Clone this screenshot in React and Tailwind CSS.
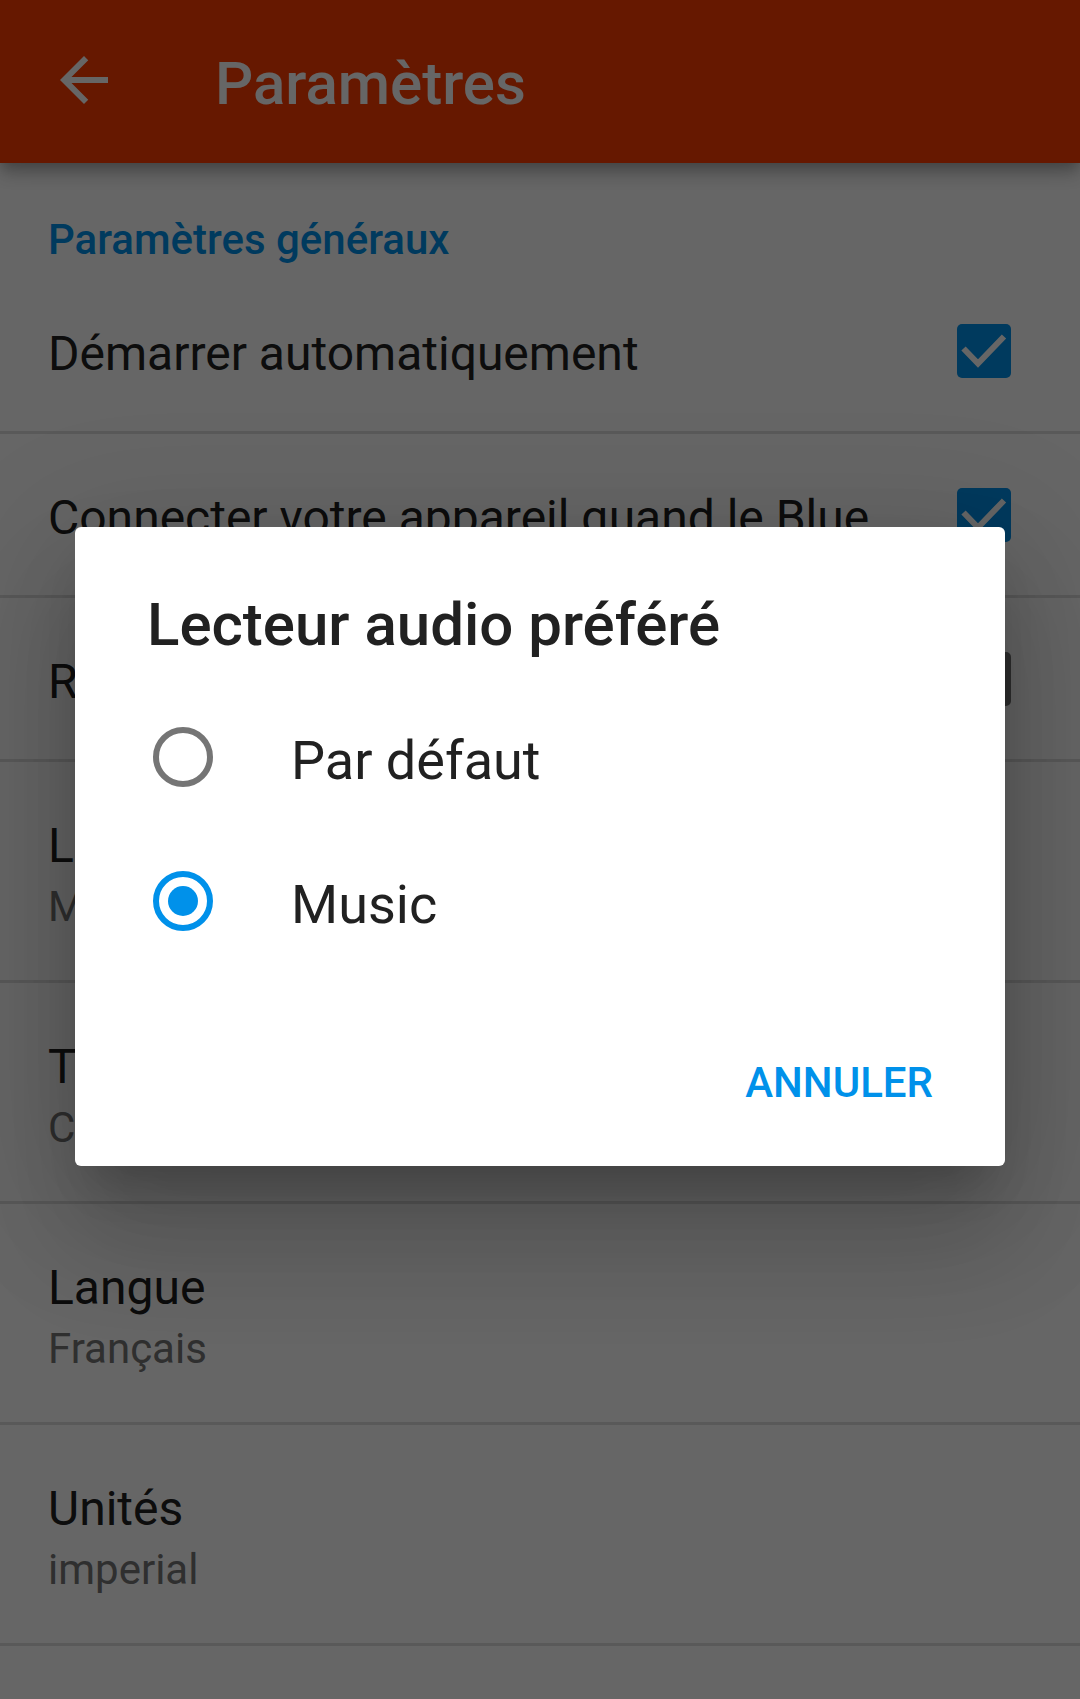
import React from "react";

function Check() {
  return (
    <svg width="54" height="54" viewBox="0 0 54 54">
      <polyline points="6.5,24.5 21,39.5 47,12.5" fill="none" stroke="#ffffff" strokeWidth="6" />
    </svg>
  );
}

function Checkbox({ checked }) {
  if (checked) {
    return (
      <div className="w-[54px] h-[54px] rounded-[5px] bg-[#0091EA] shrink-0 flex items-center justify-center">
        <Check />
      </div>
    );
  }
  return <div className="w-[54px] h-[54px] rounded-[5px] border-[6px] border-[#757575] shrink-0" />;
}

function SingleRow({ title, checked }) {
  return (
    <div className="h-[164px] border-b-[3px] border-[#dedede] flex items-center pl-[48px] pr-[69px] gap-[42px]">
      <div className="flex-1 min-w-0 pt-[6px] text-[48px] leading-[56px] text-[#212121] whitespace-nowrap overflow-hidden">{title}</div>
      <Checkbox checked={checked} />
    </div>
  );
}

function DoubleRow({ title, sub }) {
  return (
    <div className="h-[221px] border-b-[3px] border-[#dedede] pl-[48px] pt-[56px]">
      <div className="text-[48px] leading-[56px] text-[#212121]">{title}</div>
      <div className="mt-[9px] text-[42px] leading-[48px] text-[#757575]">{sub}</div>
    </div>
  );
}

function Radio({ checked }) {
  if (checked) {
    return (
      <div className="w-[60px] h-[60px] rounded-full border-[6px] border-[#0091EA] flex items-center justify-center shrink-0">
        <div className="w-[30px] h-[30px] rounded-full bg-[#0091EA]" />
      </div>
    );
  }
  return <div className="w-[60px] h-[60px] rounded-full border-[6px] border-[#757575] shrink-0" />;
}

export default function App() {
  return (
    <div className="relative w-[1080px] h-[1699px] overflow-hidden bg-white font-[Roboto,sans-serif]">
      {/* App bar */}
      <div className="relative z-10 h-[163px] bg-[#FF3D00] flex items-center shadow-[0_6px_12px_-3px_rgba(0,0,0,0.2),0_12px_15px_0_rgba(0,0,0,0.14),0_3px_30px_0_rgba(0,0,0,0.12)]">
        <div className="w-[72px] h-[72px] ml-[48px] mt-[-3px]">
          <svg width="72" height="72" viewBox="0 0 24 24">
            <path d="M20 11H7.83l5.59-5.59L12 4l-8 8 8 8 1.41-1.41L7.83 13H20v-2z" fill="#ffffff" />
          </svg>
        </div>
        <div className="ml-[95px] mt-[4px] text-[60px] leading-[72px] font-medium text-white">Paramètres</div>
      </div>

      {/* Content */}
      <div className="h-[107px] pt-[52px] pl-[48px]">
        <div className="text-[42px] leading-[50px] font-medium text-[#0091EA]">Paramètres généraux</div>
      </div>
      <SingleRow title="Démarrer automatiquement" checked />
      <SingleRow title="Connecter votre appareil quand le Blue" checked />
      <SingleRow title="Reprendre" checked={false} />
      <DoubleRow title="Lecteur audio préféré" sub="Music" />
      <DoubleRow title="Thème" sub="Clair" />
      <DoubleRow title="Langue" sub="Français" />
      <DoubleRow title="Unités" sub="imperial" />

      {/* Scrim */}
      <div className="absolute inset-0 z-20 bg-black/60" />

      {/* Dialog */}
      <div className="absolute z-30 left-[75px] top-[527px] w-[930px] h-[639px] bg-white rounded-[6px] flex flex-col shadow-[0_70px_110px_9px_rgba(0,0,0,0.14),0_26px_133px_23px_rgba(0,0,0,0.12),0_32px_44px_-20px_rgba(0,0,0,0.2)]">
        <div className="pt-[62px] pl-[72px] text-[60px] leading-[72px] font-medium text-[#212121]">Lecteur audio préféré</div>
        <div className="mt-[24px] flex flex-col">
          <div className="h-[144px] flex items-center pl-[78px]">
            <Radio checked={false} />
            <div className="ml-[78px] pt-[8px] text-[54px] leading-[64px] text-[#212121]">Par défaut</div>
          </div>
          <div className="h-[144px] flex items-center pl-[78px]">
            <Radio checked />
            <div className="ml-[78px] pt-[8px] text-[54px] leading-[64px] text-[#212121]">Music</div>
          </div>
        </div>
        <div className="mt-[85px] flex justify-end pr-[72px]">
          <div className="text-[42px] leading-[50px] font-medium text-[#0091EA]">ANNULER</div>
        </div>
      </div>
    </div>
  );
}
